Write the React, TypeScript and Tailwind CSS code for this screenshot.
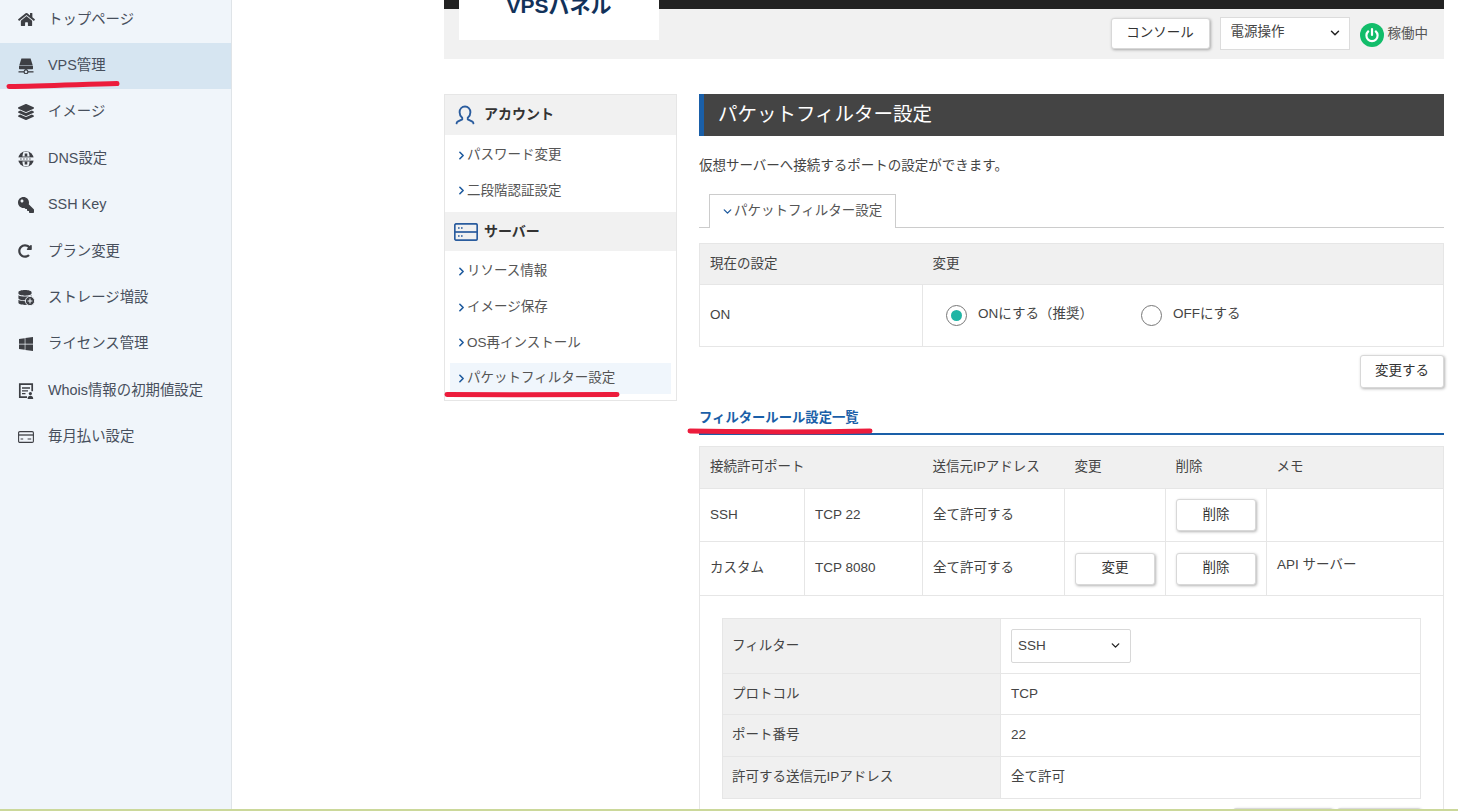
import { ChevronDown, ChevronRight } from 'lucide-react'
import { FaDatabase, FaHome, FaKey, FaLayerGroup, FaRedoAlt, FaWindows } from 'react-icons/fa'
import type { ReactNode } from 'react'

const FONT = "font-['Liberation_Sans','Noto_Sans_CJK_JP',sans-serif]"

function VpsIcon() {
  return (
    <svg viewBox="0 0 16 16" className="w-4 h-4" fill="#3d3f44">
      <path d="M3.4 0.5h9.2l2 6.6H1.4z" />
      <rect x="1" y="7.6" width="14" height="3.6" rx="0.6" />
      <rect x="7.3" y="11" width="1.4" height="2" />
      <rect x="0.5" y="13.2" width="15" height="1.3" />
      <circle cx="8" cy="13.8" r="1.9" fill="#d6e5f1" stroke="#3d3f44" strokeWidth="1.1" />
    </svg>
  )
}

function DnsIcon() {
  return (
    <svg viewBox="0 0 16 16" className="w-4 h-4">
      <circle cx="8" cy="8" r="7.8" fill="#3d3f44" />
      <path d="M5.6.8C4.8 2.4 4.5 4 4.4 5.6h7.2C11.5 4 11.2 2.4 10.4.8zM5.6 15.2C4.8 13.6 4.5 12 4.4 10.4h7.2c-.1 1.6-.4 3.2-1.2 4.8z" fill="#f0f5fa" />
      <path d="M6.7 2.4h2.6v3.2H6.7zM6.7 10.4h2.6v3.2H6.7z" fill="#3d3f44" />
      <rect x="0" y="6.4" width="16" height="3.2" fill="#f0f5fa" />
      <path d="M2.5 8h.9M5.5 8h.9M8.5 8h.9M11.5 8h.9" stroke="#3d3f44" strokeWidth="1.6" />
    </svg>
  )
}

function WhoisIcon() {
  return (
    <svg viewBox="0 0 16 16" className="w-4 h-4" fill="none">
      <path d="M9 14.2H1.8V1.2h12.4v7" stroke="#3d3f44" strokeWidth="1.7" />
      <path d="M4 5h8M4 7.8h6M4 10.6h3.5" stroke="#3d3f44" strokeWidth="1.3" />
      <circle cx="12.4" cy="10.6" r="1.6" fill="#3d3f44" />
      <path d="M9.6 16c0-2 1.2-3.2 2.8-3.2s2.8 1.2 2.8 3.2z" fill="#3d3f44" />
    </svg>
  )
}

function CardIcon() {
  return (
    <svg viewBox="0 0 16 14" className="w-4 h-[14px]" fill="none" stroke="#3d3f44">
      <rect x="0.6" y="1.6" width="14.8" height="10.8" rx="1.2" strokeWidth="1.1" />
      <path d="M.6 5h14.8" strokeWidth="1.3" />
      <path d="M2.6 9h2.6M9.6 9h3.6" strokeWidth="1.2" />
    </svg>
  )
}

function StorageIcon() {
  return (
    <span className="relative block w-4 h-4">
      <FaDatabase className="w-[14px] h-[15px] text-[#3d3f44]" />
      <svg viewBox="0 0 10 10" className="absolute -right-[1px] bottom-0 w-[10px] h-[10px]">
        <circle cx="5" cy="5" r="4.6" fill="#3d3f44" stroke="#f0f5fa" strokeWidth="0.9" />
        <path d="M5 2.6v4.8M2.6 5h4.8" stroke="#f0f5fa" strokeWidth="1.1" />
      </svg>
    </span>
  )
}

const NAV: { label: string; icon: ReactNode; active?: boolean }[] = [
  { label: 'トップページ', icon: <FaHome className="w-[17px] h-[15px] text-[#3d3f44]" /> },
  { label: 'VPS管理', icon: <VpsIcon />, active: true },
  { label: 'イメージ', icon: <FaLayerGroup className="w-4 h-4 text-[#3d3f44]" /> },
  { label: 'DNS設定', icon: <DnsIcon /> },
  { label: 'SSH Key', icon: <FaKey className="w-4 h-4 -scale-x-100 text-[#3d3f44]" /> },
  { label: 'プラン変更', icon: <FaRedoAlt className="w-[14px] h-[14px] text-[#3d3f44]" /> },
  { label: 'ストレージ増設', icon: <StorageIcon /> },
  { label: 'ライセンス管理', icon: <FaWindows className="w-4 h-4 text-[#3d3f44]" /> },
  { label: 'Whois情報の初期値設定', icon: <WhoisIcon /> },
  { label: '毎月払い設定', icon: <CardIcon /> },
]

function Sidebar() {
  return (
    <aside className="w-[232px] h-[809px] shrink-0 bg-[#f0f5fa] border-r border-[#dfe4e8]">
      <div className="-mt-[3.7px]">
        {NAV.map((n) => (
          <div
            key={n.label}
            className={`flex items-center h-[46.4px] pl-[18px] text-[14.4px] text-[#474f5c] ${n.active ? 'bg-[#d6e5f1]' : ''}`}
          >
            <span className="w-[30px] flex items-center">{n.icon}</span>
            {n.label}
          </div>
        ))}
      </div>
    </aside>
  )
}

function Btn({ children, className = '' }: { children: ReactNode; className?: string }) {
  return (
    <button className={`bg-white border border-[#d8d8d8] rounded-[3px] shadow-[1px_1px_3px_rgba(0,0,0,0.3)] text-[13.5px] text-[#333] flex items-center justify-center ${className}`}>
      {children}
    </button>
  )
}

function Header() {
  return (
    <header className="h-[59px] bg-[#f1f1f1] overflow-hidden">
      <div className="h-[9px] bg-[#222222]" />
      <div className="flex justify-between items-start pl-[15px] pr-[16px]">
        <div className="relative w-[200px] h-[40px] -mt-[9px] bg-white flex justify-center">
          <span className="text-[21px] leading-[24px] font-bold text-[#12325a] -mt-[6px]">VPSパネル</span>
        </div>
        <div className="flex items-center mt-[8px] h-[33px]">
          <Btn className="w-[99px] h-[31px] mr-[10px]">コンソール</Btn>
          <div className="relative w-[130px] h-[33px] mr-[10px]">
            <select className="appearance-none w-full h-full bg-white border border-[#dcdcdc] pl-[10px] pb-[2px] text-[13.5px] text-[#444]">
              <option>電源操作</option>
            </select>
            <ChevronDown className="absolute right-[8px] top-[9px] w-[14px] h-[14px] text-[#222]" strokeWidth={2.5} />
          </div>
          <svg viewBox="0 0 24 24" className="w-6 h-6 mr-[4px] mt-[2px]">
            <circle cx="12" cy="12" r="12" fill="#12bd6a" />
            <path d="M12 6v6" stroke="#fff" strokeWidth="2.2" strokeLinecap="round" />
            <path d="M8.2 8.4a5.6 5.6 0 1 0 7.6 0" stroke="#fff" strokeWidth="2.2" fill="none" strokeLinecap="round" />
          </svg>
          <span className="text-[13.5px] text-[#555] mt-[1px]">稼働中</span>
        </div>
      </div>
    </header>
  )
}

function MenuHead({ icon, label }: { icon: ReactNode; label: string }) {
  return (
    <div className="h-[39.5px] bg-[#f1f1f1] flex items-center text-[14px] font-bold text-[#333]">
      <span className="w-[39px] flex justify-end">{icon}</span>
      <span>{label}</span>
    </div>
  )
}

function MenuItem({ label, active }: { label: string; active?: boolean }) {
  return (
    <div className={`h-[31px] mx-[5px] mb-[4.7px] flex items-center pl-[6px] text-[13.5px] text-[#555] ${active ? 'bg-[#f0f6fc]' : ''}`}>
      <ChevronRight className="w-[13px] h-[13px] -mx-[1px] text-[#1f5b9e]" strokeWidth={3} />
      <span>{label}</span>
    </div>
  )
}

function SideMenu() {
  return (
    <nav className="w-[233px] h-[307px] border border-[#e6e6e6] shrink-0">
      <MenuHead
        label="アカウント"
        icon={
          <svg viewBox="0 0 20 20" className="w-5 h-5 mr-[9px]" fill="none" stroke="#2a5c9e" strokeWidth="1.9">
            <path d="M7.2 12.8C5.4 11.3 4.6 9.4 4.6 7.2 4.6 3.8 7 1.5 10 1.5s5.4 2.3 5.4 5.7c0 2.2-.8 4.1-2.6 5.6v1.6l4.6 2.2c.6.3.9.9 1 1.7M7.2 12.8v1.6l-4.6 2.2c-.6.3-.9.9-1 1.7" strokeLinecap="round" />
          </svg>
        }
      />
      <div className="pt-[5px] pb-[1px]">
        <MenuItem label="パスワード変更" />
        <MenuItem label="二段階認証設定" />
      </div>
      <MenuHead
        label="サーバー"
        icon={
          <svg viewBox="0 0 24 18" className="w-6 h-[18px] mr-[6px]" fill="none" stroke="#2a5c9e" strokeWidth="1.7">
            <rect x="0.8" y="0.8" width="22.4" height="16.4" rx="1.5" />
            <path d="M.8 9h22.4" />
            <path d="M4 5h1.6M7 5h1.6M4 13h1.6M7 13h1.6" strokeWidth="1.3" />
          </svg>
        }
      />
      <div className="pt-[4.5px]">
        <MenuItem label="リソース情報" />
        <MenuItem label="イメージ保存" />
        <MenuItem label="OS再インストール" />
        <MenuItem label="パケットフィルター設定" active />
      </div>
    </nav>
  )
}

const TH = 'bg-[#f0f0f0] px-[10px] font-normal text-left text-[13.5px] text-[#444]'
const TD = 'border border-[#e6e6e6] px-[10px] text-[13.5px] text-[#444]'

function Radio({ on, label }: { on?: boolean; label: string }) {
  return (
    <label className="flex items-center text-[13.5px] text-[#444]">
      <span className="w-[21px] h-[21px] rounded-full border border-[#777] flex items-center justify-center mr-[11px] mt-[1px]">
        {on && <span className="w-[11px] h-[11px] rounded-full bg-[#1fb5a5]" />}
      </span>
      <span className="-mt-[1px]">{label}</span>
    </label>
  )
}

function CurrentSetting() {
  return (
    <table className="w-[745px] table-fixed border-collapse">
      <thead>
        <tr className="h-[41px] border border-[#e6e6e6]">
          <th className={`${TH} w-[223px]`}>現在の設定</th>
          <th className={TH}>変更</th>
        </tr>
      </thead>
      <tbody>
        <tr className="h-[62px]">
          <td className={`${TD} pb-[1px]`}>ON</td>
          <td className={`${TD} pl-[23px] pb-[1px]`}>
            <div className="flex items-center gap-[48px]">
              <Radio on label="ONにする（推奨）" />
              <Radio label="OFFにする" />
            </div>
          </td>
        </tr>
      </tbody>
    </table>
  )
}

function RuleTable() {
  return (
    <table className="w-[745px] table-fixed border-collapse">
      <colgroup>
        <col className="w-[105px]" />
        <col className="w-[118px]" />
        <col className="w-[142px]" />
        <col className="w-[101px]" />
        <col className="w-[101px]" />
        <col />
      </colgroup>
      <thead>
        <tr className="h-[42px] border border-[#e6e6e6]">
          <th className={TH} colSpan={2}>接続許可ポート</th>
          <th className={TH}>送信元IPアドレス</th>
          <th className={TH}>変更</th>
          <th className={TH}>削除</th>
          <th className={TH}>メモ</th>
        </tr>
      </thead>
      <tbody>
        <tr className="h-[53px]">
          <td className={TD}>SSH</td>
          <td className={TD}>TCP 22</td>
          <td className={TD}>全て許可する</td>
          <td className={TD} />
          <td className={TD}><Btn className="w-[80px] h-[32px]">削除</Btn></td>
          <td className={TD} />
        </tr>
        <tr className="h-[54px]">
          <td className={TD}>カスタム</td>
          <td className={TD}>TCP 8080</td>
          <td className={TD}>全て許可する</td>
          <td className={TD}><Btn className="w-[80px] h-[32px]">変更</Btn></td>
          <td className={TD}><Btn className="w-[80px] h-[32px]">削除</Btn></td>
          <td className={`${TD} align-top pt-[13px]`}>API サーバー</td>
        </tr>
      </tbody>
    </table>
  )
}

function EditForm() {
  const rows: [string, ReactNode, string][] = [
    [
      'フィルター',
      <div key="s" className="relative w-[120px] h-[34px]">
        <select className="appearance-none w-full h-full bg-white border border-[#d8d8d8] rounded-[2px] pl-[6px] text-[13.5px] text-[#444]">
          <option>SSH</option>
        </select>
        <ChevronDown className="absolute right-[9px] top-[10px] w-[13px] h-[13px] text-[#222]" strokeWidth={2.5} />
      </div>,
      'h-[55px]',
    ],
    ['プロトコル', 'TCP', 'h-[41px]'],
    ['ポート番号', '22', 'h-[42px]'],
    ['許可する送信元IPアドレス', '全て許可', 'h-[42px]'],
  ]
  return (
    <div className="border-x border-[#e6e6e6] h-[220px] pt-[22px] px-[22px]">
      <table className="w-[699px] table-fixed border-collapse">
        <tbody>
          {rows.map(([k, v, h]) => (
            <tr key={k} className={h}>
              <th className="w-[278px] bg-[#f0f0f0] border border-[#e6e6e6] pl-[9px] pr-[10px] font-normal text-left text-[13.5px] text-[#444]">{k}</th>
              <td className="border border-[#e6e6e6] px-[10px] text-[13.5px] text-[#444]">{v}</td>
            </tr>
          ))}
        </tbody>
      </table>
      <div className="flex justify-end gap-[4px] mt-[9px]">
        <Btn className="w-[100px] h-[30px]">&nbsp;</Btn>
        <Btn className="w-[84px] h-[30px]">&nbsp;</Btn>
      </div>
    </div>
  )
}

function Content() {
  return (
    <section className="w-[745px]">
      <h1 className="h-[42px] bg-[#444444] border-l-[5px] border-[#1a5fa8] pl-[14px] flex items-center text-[19.5px] font-normal text-white">
        パケットフィルター設定
      </h1>
      <p className="mt-[21px] h-[18px] text-[13.5px] leading-[18px] text-[#444]">
        仮想サーバーへ接続するポートの設定ができます。
      </p>
      <div className="mt-[19px] h-[34px] border-b border-[#ccc] pl-[10px]">
        <div className="w-[187px] h-[34px] bg-white border border-b-0 border-[#ccc] flex items-center pl-[11px] text-[13.5px] text-[#555]">
          <ChevronDown className="w-[13px] h-[13px] text-[#1f5b9e]" strokeWidth={2.5} />
          <span>パケットフィルター設定</span>
        </div>
      </div>
      <div className="mt-[15px]">
        <CurrentSetting />
      </div>
      <div className="flex justify-end mt-[8px]">
        <Btn className="w-[84px] h-[33px]">変更する</Btn>
      </div>
      <h2 className="mt-[18px] h-[29px] border-b-2 border-[#1a5fa8] text-[13.33px] leading-[24px] font-bold text-[#1a5fa8]">
        フィルタールール設定一覧
      </h2>
      <div className="mt-[11px]">
        <RuleTable />
      </div>
      <EditForm />
    </section>
  )
}

export default function App() {
  return (
    <div className={`relative h-[811px] overflow-hidden bg-white ${FONT}`}>
      <div className="flex">
        <Sidebar />
        <main className="ml-[212px] w-[1000px]">
          <Header />
          <div className="flex gap-[22px] mt-[35px]">
            <SideMenu />
            <Content />
          </div>
        </main>
      </div>
      {/* hand-drawn red marks over the screenshot */}
      <svg className="absolute inset-0 w-[1458px] h-[811px] pointer-events-none" fill="none" stroke="#ec1c3c" strokeWidth="5" strokeLinecap="round">
        <path d="M9 86.5 C40 86 80 84.5 117 83.5" />
        <path d="M447 394.5 C500 395 570 395 617 394.5" />
        <path d="M690 431 C740 432 820 432 870 431" />
      </svg>
      <div className="absolute left-0 right-0 top-[809px] h-[2px] bg-[#cbd89a]" />
    </div>
  )
}
